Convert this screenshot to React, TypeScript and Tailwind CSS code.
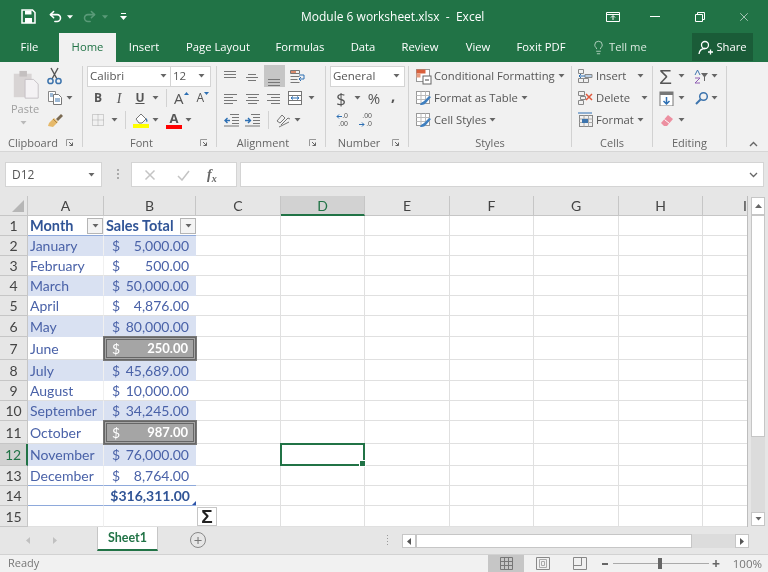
import { Lightbulb, Redo2, Undo2, X } from 'lucide-react'
import type { ReactNode } from 'react'

const Caret = ({ className = '' }: { className?: string }) => (
  <svg width="7" height="4" viewBox="0 0 7 4" className={className}>
    <path d="M0.5 0h6L3.5 3.5z" fill="#666" />
  </svg>
)

const Ico = ({ s = 16, h, children }: { s?: number; h?: number; children: ReactNode }) => (
  <svg width={s} height={h ?? s} viewBox={`0 0 ${s} ${h ?? s}`} fill="none" className="shrink-0">
    {children}
  </svg>
)

const Launcher = () => (
  <svg width="8" height="8" viewBox="0 0 8 8" fill="none">
    <path d="M0.5 7V0.5H7" stroke="#999" />
    <path d="M3 3l3.5 3.5M6.5 3.5v3h-3" stroke="#666" />
  </svg>
)

function Group({ label, launcher, w, children }: { label: string; launcher?: boolean; w: string; children: ReactNode }) {
  return (
    <div className={`flex flex-col shrink-0 ${w}`}>
      <div className="h-[74px] pt-[3px]">{children}</div>
      <div className="flex items-center h-[14px] text-[11px] text-[#666]">
        <span className="flex-1 text-center">{label}</span>
        {launcher && <span className="w-[16px] flex"><Launcher /></span>}
      </div>
    </div>
  )
}

const Sep = () => <div className="w-px h-[81px] mt-[4px] bg-[#d2d2d2] shrink-0" />
const Row = ({ children }: { children: ReactNode }) => <div className="flex items-center h-[22px]">{children}</div>
const Mini = () => <div className="w-px h-[18px] bg-[#d2d2d2]" />

const Lines = ({ kind }: { kind: 'l' | 'c' | 'r' | 't' | 'm' | 'b' }) => {
  const rows: Record<string, [number, number, number][]> = {
    t: [[1, 13, 2], [1, 13, 5], [1, 13, 8]],
    m: [[3, 11, 5], [1, 13, 8], [3, 11, 11]],
    b: [[1, 13, 8], [1, 13, 11], [1, 13, 14]],
    l: [[1, 14, 3], [1, 10, 6], [1, 14, 9], [1, 10, 12]],
    c: [[1, 14, 3], [3, 12, 6], [1, 14, 9], [3, 12, 12]],
    r: [[1, 14, 3], [5, 14, 6], [1, 14, 9], [5, 14, 12]],
  }
  return (
    <Ico s={15}>
      {rows[kind].map(([a, b, y]) => (
        <path key={`${a}-${y}`} d={`M${a} ${y + 0.5}H${b}`} stroke="#777" />
      ))}
    </Ico>
  )
}

const Indent = ({ out }: { out?: boolean }) => (
  <Ico s={17} h={14}>
    <path d="M7 1.5h9M9 4.5h7M9 7.5h7M9 10.5h7M1 13h15" stroke="#777" />
    {out ? <path d="M7 7.5H2M4.5 5L2 7.5 4.5 10" stroke="#2d6fb3" strokeWidth="1.4" /> : <path d="M1 7.5h5M4 5l2.5 2.5L4 10" stroke="#2d6fb3" strokeWidth="1.4" />}
  </Ico>
)

const StyleIcon = () => (
  <Ico s={17}>
    <rect x="1.5" y="1.5" width="13" height="12" fill="#fff" stroke="#999" />
    <path d="M1.5 5.5h13M1.5 9.5h13M6 1.5v12M10.5 1.5v12" stroke="#bbb" />
    <path d="M5 15c1-3 3-3 4-4l5-5 2 1-5 6c-2 2-4 2-6 2z" fill="#3f7fbf" />
  </Ico>
)

function RibbonText({ icon, label, w, caretClass }: { icon: ReactNode; label: string; w?: string; caretClass: string }) {
  return (
    <Row>
      <span className="w-[18px] flex justify-center">{icon}</span>
      <span className={`text-[11.25px] text-[#555] whitespace-nowrap ml-[2px] ${w ?? ''}`}>{label}</span>
      <Caret className={caretClass} />
    </Row>
  )
}

const Select = ({ label, w, caret }: { label: string; w: string; caret: string }) => (
  <div className={`flex items-center h-[21px] bg-white border border-[#d4d4d4] text-[11.5px] text-[#555] pl-[2px] ${w}`}>
    <span className="flex-1">{label}</span>
    <Caret className={caret} />
  </div>
)

function Ribbon() {
  return (
    <div className="flex h-[90px] bg-[#f1f1f1] border-b border-[#d6d6d6] shrink-0">
      <Group label="Clipboard" launcher w="w-[82px]">
        <div className="flex">
          <div className="w-[47px] pl-[12px] flex flex-col items-start">
            <svg width="28" height="30" viewBox="0 0 28 32" fill="none" className="mt-[5px]">
              <rect x="1" y="4" width="19" height="25" fill="#d8d4d4" />
              <rect x="7" y="1" width="8" height="6" fill="#c4c0c0" />
              <path d="M13 10h9l5 5v15H13z" fill="#f4f2f4" stroke="#c4c0c4" />
            </svg>
            <span className="text-[11px] text-[#a0a0a0] leading-[14px] mt-[2px] ml-[-1px]">Paste</span>
            <Caret className="ml-[8px] mt-[5px] opacity-40" />
          </div>
          <div className="flex flex-col">
            <Row>
              <svg width="15" height="18" viewBox="0 0 15 18" fill="none">
                <path d="M4 1l6 11M11 1L5 12" stroke="#555" strokeWidth="1.4" />
                <circle cx="3.5" cy="14" r="2.6" stroke="#3d74ad" strokeWidth="1.5" />
                <circle cx="11.5" cy="14" r="2.6" stroke="#3d74ad" strokeWidth="1.5" />
              </svg>
            </Row>
            <Row>
              <Ico s={16}>
                <path d="M1.5 1.5h7v10h-7z" fill="#fff" stroke="#888" />
                <path d="M6.5 4.5h5l3 3v7h-8z" fill="#fff" stroke="#777" />
                <path d="M8 9h5M8 11h5M3 4h3M3 6h3" stroke="#3d74ad" />
              </Ico>
              <Caret className="ml-[3px]" />
            </Row>
            <Row>
              <Ico s={17}>
                <path d="M9 7l5-5 2 2-5 5z" fill="#7a6a52" />
                <path d="M2 11l5-5 4 4-5 5-5-1z" fill="#e6b96a" />
                <path d="M6 7l4 4" stroke="#a9844a" />
              </Ico>
            </Row>
          </div>
        </div>
      </Group>
      <Sep />
      <Group label="Font" launcher w="w-[133px]">
        <div className="pl-[4px]">
          <Row>
            <Select label="Calibri" w="w-[84px]" caret="mr-[3px]" />
            <Select label="12" w="w-[41px] ml-[-1px]" caret="mr-[5px]" />
          </Row>
          <Row>
            <span className="w-[20px] ml-[1px] text-center font-bold text-[12px] text-[#555]">B</span>
            <span className="w-[22px] text-center italic font-['Liberation_Serif',serif] text-[14px] text-[#555]">I</span>
            <span className="w-[20px] text-center underline font-bold text-[12px] text-[#555]">U</span>
            <Caret className="ml-[2px] mr-[7px]" />
            <Mini />
            <span className="ml-[7px] text-[15px] leading-none text-[#555]">A</span>
            <svg width="5" height="3" viewBox="0 0 5 3" className="mb-[10px] shrink-0"><path d="M0 3h5L2.500 0z" fill="#2d6fb3" /></svg>
            <span className="ml-[8px] text-[12px] leading-none text-[#555]">A</span>
            <svg width="5" height="3" viewBox="0 0 5 3" className="mb-[10px] shrink-0"><path d="M0 0h5L2.500 3z" fill="#2d6fb3" /></svg>
          </Row>
          <Row>
            <span className="ml-[4px]">
              <Ico s={14}>
                <rect x="1.5" y="1.5" width="11" height="11" stroke="#aaa" strokeDasharray="1 1" />
                <path d="M7 1.5v11M1.5 7h11" stroke="#aaa" strokeDasharray="1 1" />
              </Ico>
            </span>
            <Caret className="ml-[6px] mr-[7px]" />
            <Mini />
            <span className="ml-[7px] flex flex-col">
              <Ico s={16} h={12}>
                <path d="M3 7l5-5 5 5-4 4H6z" fill="#fff" stroke="#777" />
                <path d="M13 6c1.5 1.5 2 3 1 4-1 0-1-2-1-4z" fill="#3d74ad" />
              </Ico>
              <span className="h-[4px] bg-[#ffff00] w-[16px]" />
            </span>
            <Caret className="ml-[3px] mr-[7px]" />
            <span className="flex flex-col items-center w-[16px]">
              <span className="text-[13px] leading-[13px] font-bold text-[#555]">A</span>
              <span className="h-[4px] bg-[#ff0000] w-[16px]" />
            </span>
            <Caret className="ml-[3px]" />
          </Row>
        </div>
      </Group>
      <Sep />
      <Group label="Alignment" launcher w="w-[108px]">
        <div className="pl-[6px]">
          <Row>
            <span className="w-[22px]"><Lines kind="t" /></span>
            <span className="w-[19px]"><Lines kind="m" /></span>
            <span className="w-[21px] h-[22px] bg-[#c6c6c6] flex items-end justify-center pb-[1px]"><Lines kind="b" /></span>
            <span className="ml-[4px]">
              <Ico s={17}>
                <path d="M1.5 2.5h9v3h-9zM1.5 8.5h9M1.5 11.5h7M1.5 14.5h9" stroke="#777" />
                <path d="M2 3h5v2H2z" fill="#d98a6c" />
                <path d="M10 7h5v4h-5M12 9l-2 2 2 2" stroke="#2d6fb3" />
              </Ico>
            </span>
          </Row>
          <Row>
            <span className="w-[22px]"><Lines kind="l" /></span>
            <span className="w-[21px]"><Lines kind="c" /></span>
            <span className="w-[21px]"><Lines kind="r" /></span>
            <Ico s={16}>
              <rect x="1.5" y="1.5" width="13" height="13" fill="#fff" stroke="#777" />
              <path d="M1.5 5.5h13M1.5 10.5h13" stroke="#777" />
              <path d="M4 8h8M4 8l2-1.5M4 8l2 1.5M12 8l-2-1.5M12 8l-2 1.5" stroke="#2d6fb3" />
            </Ico>
            <Caret className="ml-[5px]" />
          </Row>
          <Row>
            <span className="w-[21px]"><Indent out /></span>
            <span className="w-[24px]"><Indent /></span>
            <Mini />
            <span className="ml-[6px]">
              <Ico s={17}>
                <path d="M2 9l5-6 3 3-5 5zM6 13l7-7 2 1" stroke="#777" />
                <path d="M4 15l10-5" stroke="#777" />
              </Ico>
            </span>
            <Caret className="ml-[2px]" />
          </Row>
        </div>
      </Group>
      <Sep />
      <Group label="Number" launcher w="w-[82px]">
        <div className="pl-[4px]">
          <Row><Select label="General" w="w-[75px]" caret="mr-[4px]" /></Row>
          <Row>
            <span className="w-[22px] text-center text-[17px] leading-none text-[#555]">$</span>
            <Caret className="ml-[2px]" />
            <span className="w-[24px] ml-[1px] text-center text-[15px] leading-none text-[#555]">%</span>
            <span className="ml-[5px] mb-[6px] text-[15px] font-bold text-[#555] leading-none">,</span>
          </Row>
          <Row>
            <div className="ml-[3px] w-[15px] flex flex-col items-end text-[7px] leading-[8px] text-[#555] font-['Liberation_Sans',sans-serif]">
              <div className="flex items-center">
                <svg width="6" height="5" viewBox="0 0 6 5" fill="none"><path d="M6 2.500H1M3 .5L1 2.500l2 2" stroke="#2d6fb3" /></svg>
                <span>.0</span>
              </div>
              <span>.00</span>
            </div>
            <div className="ml-[7px] w-[17px] flex flex-col items-end text-[7px] leading-[8px] text-[#555] font-['Liberation_Sans',sans-serif]">
              <span>.00</span>
              <div className="flex items-center">
                <svg width="7" height="5" viewBox="0 0 7 5" fill="none"><path d="M0 2.500h5M3 .5l2 2-2 2" stroke="#2d6fb3" /></svg>
                <span>.0</span>
              </div>
            </div>
          </Row>
        </div>
      </Group>
      <Sep />
      <Group label="Styles" w="w-[162px]">
        <div className="pl-[5px]">
          <RibbonText
            icon={
              <Ico s={17}>
                <rect x="1.5" y="1.5" width="13" height="12" fill="#fff" stroke="#999" />
                <path d="M1.5 1.5h9v4h-9z" fill="#d9603c" />
                <path d="M1.5 5.5h4v4h-4z" fill="#e89a7c" />
                <rect x="8" y="8" width="8" height="8" fill="#fff" stroke="#666" />
                <path d="M10 12h4" stroke="#444" />
              </Ico>
            }
            label="Conditional Formatting"
            caretClass="ml-[3px]"
          />
          <RibbonText icon={<StyleIcon />} label="Format as Table" caretClass="ml-[3px]" />
          <RibbonText icon={<StyleIcon />} label="Cell Styles" caretClass="ml-[3px]" />
        </div>
      </Group>
      <Sep />
      <Group label="Cells" w="w-[80px]">
        <div className="pl-[4px]">
          <RibbonText
            icon={
              <Ico s={16}>
                <path d="M1.5 1.5h5v4h-5zM1.5 10.5h5v4h-5zM6.5 10.5h5v4h-5z" stroke="#888" />
                <path d="M8 6.5h7v3H8z" fill="#b9cfe6" stroke="#888" />
                <path d="M8 8H2M4 6L2 8l2 2" stroke="#2d6fb3" />
              </Ico>
            }
            label="Insert"
            caretClass="ml-[11px]"
          />
          <RibbonText
            icon={
              <Ico s={16}>
                <path d="M1.5 1.5h6v4h-6zM1.5 10.5h5v4h-5zM3.5 6.5h5v3h-5z" stroke="#888" />
                <path d="M9 4l6 6M15 4l-6 6" stroke="#e0583c" strokeWidth="1.5" />
              </Ico>
            }
            label="Delete"
            caretClass="ml-[11px]"
          />
          <RibbonText
            icon={
              <Ico s={16}>
                <rect x="2.5" y="3.5" width="13" height="11" stroke="#888" />
                <path d="M2.5 7h13M2.5 10.5h13M7 3.5v11M11.500 3.500v11" stroke="#aaa" />
                <path d="M5 7h6v4H5z" fill="#3d74ad" />
                <path d="M1 1h14" stroke="#2d6fb3" />
              </Ico>
            }
            label="Format"
            caretClass="ml-[3px]"
          />
        </div>
      </Group>
      <Sep />
      <Group label="Editing" w="w-[73px]">
        <div className="pl-[6px]">
          <Row>
            <span className="w-[16px] text-[21px] leading-none text-[#555] font-['Liberation_Sans',sans-serif]">Σ</span>
            <Caret className="ml-[3px] mr-[9px]" />
            <Ico s={15}>
              <path d="M1 6l2.500-5L6 6" stroke="#3d74ad" />
              <path d="M1 9h5l-5 5h5" stroke="#8f5fb3" />
              <path d="M7 4h7l-3 4v4H10V8z" fill="#666" />
            </Ico>
            <Caret className="ml-[2px]" />
          </Row>
          <Row>
            <Ico s={15}>
              <rect x="1" y="1" width="13" height="14" fill="#fff" stroke="#777" />
              <path d="M1 1h13v3H1z" fill="#777" />
              <path d="M7.500 6v7M4.500 10l3 3 3-3" stroke="#2d6fb3" strokeWidth="1.5" />
            </Ico>
            <Caret className="ml-[4px] mr-[9px]" />
            <Ico s={15}>
              <circle cx="9.500" cy="5.500" r="3.800" stroke="#3d74ad" strokeWidth="1.5" />
              <path d="M6.500 8.500L2 13" stroke="#3d74ad" strokeWidth="2" />
            </Ico>
            <Caret className="ml-[2px]" />
          </Row>
          <Row>
            <Ico s={15}>
              <path d="M9 2l5 4-6 7H5l-3-3z" fill="#ec8fa0" />
              <path d="M5.500 6.500l5 4" stroke="#fff" />
            </Ico>
            <Caret className="ml-[4px]" />
          </Row>
        </div>
      </Group>
      <Sep />
      <div className="flex-1 flex items-end justify-end pr-[10px] pb-[4px]">
        <svg width="9" height="6" viewBox="0 0 9 6" fill="none"><path d="M1 5l3.500-3.500L8 5" stroke="#666" strokeWidth="1.4" /></svg>
      </div>
    </div>
  )
}

const cols = ['A', 'B', 'C', 'D', 'E', 'F', 'G', 'H', 'I']
const colWidths = ['w-[76px]', 'w-[92px]', 'w-[85px]', 'w-[84px]', 'w-[85px]', 'w-[84px]', 'w-[85px]', 'w-[84px]', 'w-[85px]']

const rows: { h: string; a?: string; b?: string; tag?: string }[] = [
  { h: 'h-[20px]', a: 'Month', b: 'Sales Total', tag: 'head' },
  { h: 'h-[20px]', a: 'January', b: '5,000.00' },
  { h: 'h-[20px]', a: 'February', b: '500.00' },
  { h: 'h-[20px]', a: 'March', b: '50,000.00' },
  { h: 'h-[20px]', a: 'April', b: '4,876.00' },
  { h: 'h-[21px]', a: 'May', b: '80,000.00' },
  { h: 'h-[23px]', a: 'June', b: '250.00', tag: 'check' },
  { h: 'h-[21px]', a: 'July', b: '45,689.00' },
  { h: 'h-[20px]', a: 'August', b: '10,000.00' },
  { h: 'h-[20px]', a: 'September', b: '34,245.00' },
  { h: 'h-[23px]', a: 'October', b: '987.00', tag: 'check' },
  { h: 'h-[22px]', a: 'November', b: '76,000.00' },
  { h: 'h-[20px]', a: 'December', b: '8,764.00', tag: 'last' },
  { h: 'h-[20px]', b: '$316,311.00', tag: 'total' },
  { h: 'h-[21px]' },
]

const FilterBtn = () => (
  <span className="w-[16px] h-[16px] shrink-0 bg-[#f4f4f4] border border-[#b5b5b5] flex items-center justify-center">
    <Caret />
  </span>
)

function SheetRow({ row, i }: { row: (typeof rows)[number]; i: number }) {
  const n = i + 1
  const banded = i > 0 && i < 13 && n % 2 === 0
  const line = row.tag === 'head' || row.tag === 'last' || row.tag === 'total' ? 'border-b-[#8ea9db]' : banded ? 'border-b-[#d9e1f2]' : 'border-b-[#e0e0e0]'
  const rowActive = n === 12
  return (
    <div className={`flex ${row.h}`}>
      <div
        className={`w-[28px] shrink-0 flex items-center justify-center border-b border-r text-[14px] ${
          rowActive ? 'bg-[#d2d2d2] text-[#217346] border-r-2 border-r-[#217346] border-b-[#c6c6c6]' : 'bg-[#e6e6e6] text-[#444] border-[#c6c6c6]'
        }`}
      >
        {n}
      </div>
      <div
        className={`w-[76px] shrink-0 flex items-center pl-[2px] border-b border-r border-r-[#f0f0f0] ${line} ${banded ? 'bg-[#d9e1f2]' : 'bg-white'} ${
          row.tag === 'head' ? 'font-bold text-[#305496] justify-between pr-0 text-[14.5px]' : 'text-[#4a62a8] text-[14px]'
        } whitespace-nowrap`}
      >
        <span>{row.a}</span>
        {row.tag === 'head' && <FilterBtn />}
      </div>
      {row.tag === 'check' ? (
        <div className="relative z-10 w-[92px] shrink-0 flex items-center justify-between pl-[5px] pr-[5px] bg-[#a5a5a5] text-white font-bold text-[13px] border-[3px] border-double border-[#666] outline outline-1 outline-[#777]">
          <span className="font-normal text-[14px]">$</span>
          <span>{row.b}</span>
        </div>
      ) : row.tag === 'head' ? (
        <div className={`w-[92px] shrink-0 flex items-center justify-between pl-[2px] border-b ${line} bg-white font-bold text-[#305496] text-[14.5px] whitespace-nowrap`}>
          <span>{row.b}</span>
          <FilterBtn />
        </div>
      ) : row.tag === 'total' ? (
        <div className={`relative w-[92px] shrink-0 flex items-center justify-end pr-[6px] border-b ${line} bg-white font-bold text-[#305496] text-[14px]`}>
          <span>{row.b}</span>
          <span className="absolute right-0 bottom-0 w-0 h-0 border-l-[4px] border-l-transparent border-b-[4px] border-b-[#2f55a8]" />
        </div>
      ) : (
        <div className={`w-[92px] shrink-0 flex items-center justify-between pl-[8px] pr-[7px] border-b ${line} ${banded ? 'bg-[#d9e1f2]' : 'bg-white'} text-[#4a62a8] text-[14px]`}>
          {row.b && <span>$</span>}
          <span>{row.b}</span>
        </div>
      )}
      {colWidths.slice(2).map((w, c) => (
        <div key={w + c} className={`relative ${w} shrink-0 border-b border-r border-[#e0e0e0] bg-white`}>
          {n === 15 && c === 0 && (
            <div className="absolute left-[1px] top-[1px] w-[20px] h-[19px] bg-white border border-[#c6c6c6] flex items-center justify-center text-[19px] leading-none text-[#222] font-['Liberation_Sans',sans-serif] font-bold">
              Σ
            </div>
          )}
          {n === 12 && c === 1 && (
            <div className="absolute z-10 -inset-px border-2 border-[#217346]">
              <span className="absolute -right-[3px] -bottom-[3px] w-[5px] h-[5px] bg-[#217346] border border-white box-content" />
            </div>
          )}
        </div>
      ))}
    </div>
  )
}

function Sheet() {
  return (
    <div className="flex flex-1 min-h-0 bg-[#e6e6e6] pt-[9px]">
      <div className="w-[748px] shrink-0 flex flex-col border-r border-[#bdbdbd] font-['Lato',sans-serif] overflow-hidden">
        <div className="flex h-[20px] shrink-0">
          <div className="w-[28px] shrink-0 bg-[#e6e6e6] border-r border-b border-[#c6c6c6] flex items-end justify-end p-[3px]">
            <span className="w-0 h-0 border-l-[12px] border-l-transparent border-b-[12px] border-b-[#b6b6b6]" />
          </div>
          {cols.map((c, i) => (
            <div
              key={c}
              className={`${colWidths[i]} shrink-0 flex items-center justify-center text-[14px] border-r ${
                c === 'D' ? 'bg-[#d2d2d2] text-[#217346] border-b-2 border-b-[#217346] border-r-[#c6c6c6]' : 'bg-[#e6e6e6] text-[#444] border-b border-[#c6c6c6]'
              }`}
            >
              {c}
            </div>
          ))}
        </div>
        {rows.map((r, i) => (
          <SheetRow key={i} row={r} i={i} />
        ))}
      </div>
      <div className="flex-1 flex flex-col items-center pt-[1px]">
        <div className="w-[14px] h-[18px] flex items-center justify-center bg-white border border-[#c6c6c6]">
          <svg width="7" height="4" viewBox="0 0 7 4"><path d="M0 4h7L3.500 0z" fill="#666" /></svg>
        </div>
        <div className="w-[14px] h-[222px] bg-white border border-[#c6c6c6]" />
        <div className="flex-1 w-[14px] bg-[#dcdcdc]" />
        <div className="w-[14px] h-[14px] flex items-center justify-center bg-white border border-[#c6c6c6] mb-[1px]">
          <Caret />
        </div>
      </div>
    </div>
  )
}

function Tabs() {
  return (
    <div className="flex items-start h-[28px] shrink-0 bg-[#e6e6e6] border-b border-[#d2d2d2]">
      <div className="w-[97px] h-[26px] flex items-center pl-[26px] gap-[23px] shrink-0">
        <svg width="4" height="7" viewBox="0 0 4 7"><path d="M4 0v7L0 3.500z" fill="#c0c0c0" /></svg>
        <svg width="4" height="7" viewBox="0 0 4 7"><path d="M0 0v7l4-3.500z" fill="#c0c0c0" /></svg>
      </div>
      <div className="w-[61px] h-[24px] shrink-0 bg-white border-x border-[#c6c6c6] border-b-2 border-b-[#217346] flex items-center justify-center text-[12.500px] font-bold text-[#217346] font-['Lato',sans-serif]">
        Sheet1
      </div>
      <div className="w-[16px] h-[16px] ml-[32px] mt-[5px] rounded-full border border-[#888] shrink-0 flex items-center justify-center text-[15px] leading-none text-[#777]">+</div>
      <div className="ml-[181px] mt-[8px] flex flex-col gap-[2px]">
        <span className="w-px h-px bg-[#999]" />
        <span className="w-px h-px bg-[#999]" />
        <span className="w-px h-px bg-[#999]" />
        <span className="w-px h-px bg-[#999]" />
      </div>
      <div className="ml-[14px] mt-[7px] flex h-[14px]">
        <div className="w-[14px] bg-white border border-[#c6c6c6] flex items-center justify-center">
          <svg width="4" height="7" viewBox="0 0 4 7"><path d="M4 0v7L0 3.500z" fill="#555" /></svg>
        </div>
        <div className="w-[276px] bg-white border border-[#c6c6c6]" />
        <div className="w-[43px] bg-[#dcdcdc]" />
        <div className="w-[14px] bg-white border border-[#c6c6c6] flex items-center justify-center">
          <svg width="4" height="7" viewBox="0 0 4 7"><path d="M0 0v7l4-3.500z" fill="#555" /></svg>
        </div>
      </div>
    </div>
  )
}

function StatusBar() {
  return (
    <div className="flex items-center h-[17px] shrink-0 bg-[#f1f1f1] text-[11px] text-[#777]">
      <span className="pl-[8px] w-[488px] shrink-0">Ready</span>
      <div className="w-[36px] h-[17px] bg-[#c6c6c6] flex items-center justify-center shrink-0">
        <Ico s={13}>
          <path d="M.5.5h12v12H.5zM4.500.5v12M8.500.5v12M.5 4.500h12M.5 8.500h12" stroke="#777" />
        </Ico>
      </div>
      <span className="ml-[12px]">
        <Ico s={14} h={13}>
          <path d="M.5.5h13v12H.5z" stroke="#888" />
          <path d="M3.500 2.500h7v8h-7zM5.500 4.500h3v4h-3z" stroke="#aaa" />
        </Ico>
      </span>
      <span className="ml-[23px]">
        <Ico s={14} h={13}>
          <path d="M.5.5h13v12H.5zM.5 8.500h8V.5" stroke="#888" />
        </Ico>
      </span>
      <span className="ml-[15px] w-[6px] h-[2px] bg-[#666]" />
      <div className="ml-[5px] w-[96px] h-px bg-[#aaa] flex justify-center items-center shrink-0">
        <span className="w-[4px] h-[11px] bg-[#666] mr-[3px]" />
      </div>
      <span className="ml-[3px] text-[14px] leading-none text-[#666] font-bold">+</span>
      <span className="ml-auto pr-[6px] text-[11.500px]">100%</span>
    </div>
  )
}

export default function App() {
  return (
    <div className="w-[768px] h-[572px] overflow-hidden flex flex-col font-['Open_Sans',sans-serif] blur-[0.35px]">
      {/* title bar */}
      <div className="flex items-center h-[33px] shrink-0 bg-[#217346] text-white">
        <div className="flex items-center pl-[21px] w-[301px] shrink-0">
          <svg width="15" height="15" viewBox="0 0 15 15" fill="none">
            <path d="M1 1h10.500L14 3.500V14H1z" stroke="#fff" strokeWidth="1.500" />
            <path d="M4 1.500h6.500V5.500H4z" fill="#fff" />
            <path d="M4 9h7v5H4z" fill="#fff" />
          </svg>
          <Undo2 size={15} strokeWidth={2.500} className="ml-[12px]" />
          <svg width="6" height="4" viewBox="0 0 7 4" className="ml-[4px]"><path d="M0 0h7L3.500 4z" fill="#fff" /></svg>
          <Redo2 size={15} strokeWidth={2.500} className="ml-[9px] text-[#5a9a78]" />
          <svg width="6" height="4" viewBox="0 0 7 4" className="ml-[5px]"><path d="M0 0h7L3.500 4z" fill="#5a9a78" /></svg>
          <svg width="7" height="7" viewBox="0 0 7 7" className="ml-[12px]"><path d="M1 .5h5" stroke="#fff" /><path d="M0 3h7L3.500 7z" fill="#fff" /></svg>
        </div>
        <span className="text-[12px] w-[295px] shrink-0 whitespace-pre">Module 6 worksheet.xlsx  -  Excel</span>
        <svg width="14" height="10" viewBox="0 0 14 10" fill="none" className="ml-[10px]"><path d="M.5.500h13v9H.5zM.5 2.500h13M7 8V4M5 5.500L7 3.500l2 2" stroke="#fff" /></svg>
        <span className="ml-[30px] w-[10px] h-px bg-white" />
        <svg width="10" height="10" viewBox="0 0 10 10" fill="none" className="ml-[35px]"><path d="M.5 2.500h7v7h-7zM2.500 2.500v-2h7v7h-2" stroke="#fff" /></svg>
        <X size={14} strokeWidth={1} className="ml-[32px]" />
      </div>
      {/* tabs */}
      <div className="flex items-end h-[29px] shrink-0 bg-[#217346] text-white text-[11.25px]">
        <div className="w-[59px] h-[29px] flex items-center justify-center">File</div>
        <div className="w-[57px] h-[29px] flex items-center justify-center bg-[#f1f1f1] text-[#217346]">Home</div>
        <div className="w-[56px] h-[29px] flex items-center justify-center">Insert</div>
        <div className="w-[92px] h-[29px] flex items-center justify-center">Page Layout</div>
        <div className="w-[72px] h-[29px] flex items-center justify-center">Formulas</div>
        <div className="w-[54px] h-[29px] flex items-center justify-center">Data</div>
        <div className="w-[60px] h-[29px] flex items-center justify-center">Review</div>
        <div className="w-[56px] h-[29px] flex items-center justify-center">View</div>
        <div className="w-[70px] h-[29px] flex items-center justify-center">Foxit PDF</div>
        <div className="w-[116px] h-[29px] flex items-center pl-[15px] gap-[3px] text-[#d8e8de]">
          <Lightbulb size={15} strokeWidth={1.200} />
          <span>Tell me</span>
        </div>
        <div className="w-[61px] h-[28px] mb-[1px] flex items-center justify-center gap-[2px] bg-[#1a5c38]">
          <svg width="16" height="15" viewBox="0 0 16 15" fill="none">
            <circle cx="7" cy="5" r="3.500" stroke="#fff" strokeWidth="1.300" />
            <path d="M1 14c.5-4 3-5.500 6-5.500M10 12h5M12.500 9.500v5" stroke="#fff" strokeWidth="1.300" />
          </svg>
          <span>Share</span>
        </div>
      </div>
      <Ribbon />
      {/* formula bar */}
      <div className="flex items-start h-[35px] pt-[10px] shrink-0 bg-[#e6e6e6]">
        <div className="ml-[5px] w-[97px] h-[25px] bg-white border border-[#d4d4d4] flex items-center pl-[6px] text-[12px] text-[#555]">
          <span className="flex-1">D12</span>
          <Caret className="mr-[6px]" />
        </div>
        <div className="ml-[15px] mt-[7px] flex flex-col gap-[2px]">
          <span className="w-[2px] h-[2px] bg-[#aaa]" />
          <span className="w-[2px] h-[2px] bg-[#aaa]" />
          <span className="w-[2px] h-[2px] bg-[#aaa]" />
        </div>
        <div className="ml-[12px] w-[106px] h-[25px] bg-white border border-[#d4d4d4] flex items-center shrink-0">
          <svg width="12" height="12" viewBox="0 0 12 12" fill="none" className="ml-[12px]"><path d="M1.500 1.500l9 9M10.500 1.500l-9 9" stroke="#c4c4c4" strokeWidth="1.500" /></svg>
          <svg width="13" height="12" viewBox="0 0 13 12" fill="none" className="ml-[21px]"><path d="M1 7l4 4 7-9" stroke="#c4c4c4" strokeWidth="1.500" /></svg>
          <span className="ml-[17px] italic font-bold font-['Liberation_Serif',serif] text-[14px] text-[#666]">f<sub className="text-[10px]">x</sub></span>
        </div>
        <div className="ml-[3px] w-[524px] h-[25px] bg-white border border-[#d4d4d4] flex items-center justify-end pr-[5px] shrink-0">
          <svg width="9" height="6" viewBox="0 0 9 6" fill="none"><path d="M1 1l3.500 3.500L8 1" stroke="#666" strokeWidth="1.300" /></svg>
        </div>
      </div>
      <Sheet />
      <Tabs />
      <StatusBar />
    </div>
  )
}
